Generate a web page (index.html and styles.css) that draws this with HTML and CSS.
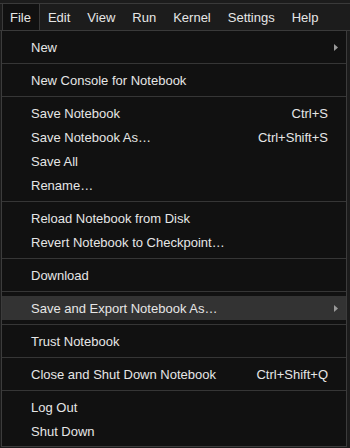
FILE: index.html
```html
<!DOCTYPE html>
<html>
<head>
    <title>File Menu</title>
    <link rel="stylesheet" href="styles.css">
</head>
<body>
    <div class="menubar">
        <div class="top-item active">File</div>
        <div class="top-item">Edit</div>
        <div class="top-item">View</div>
        <div class="top-item">Run</div>
        <div class="top-item">Kernel</div>
        <div class="top-item">Settings</div>
        <div class="top-item">Help</div>
    </div>

    <div class="menu">
        <div class="item"><span class="label">New</span><span class="arrow"><svg width="4" height="7" viewBox="0 0 4 7"><polygon points="0,0 4,3.5 0,7" fill="#9a9a9a"/></svg></span></div>
        <div class="sep"></div>
        <div class="item"><span class="label">New Console for Notebook</span></div>
        <div class="sep"></div>
        <div class="item"><span class="label">Save Notebook</span><span class="key">Ctrl+S</span></div>
        <div class="item"><span class="label">Save Notebook As…</span><span class="key">Ctrl+Shift+S</span></div>
        <div class="item"><span class="label">Save All</span></div>
        <div class="item"><span class="label">Rename…</span></div>
        <div class="sep"></div>
        <div class="item"><span class="label">Reload Notebook from Disk</span></div>
        <div class="item"><span class="label">Revert Notebook to Checkpoint…</span></div>
        <div class="sep"></div>
        <div class="item"><span class="label">Download</span></div>
        <div class="sep"></div>
        <div class="item hover"><span class="label">Save and Export Notebook As…</span><span class="arrow"><svg width="4" height="7" viewBox="0 0 4 7"><polygon points="0,0 4,3.5 0,7" fill="#9a9a9a"/></svg></span></div>
        <div class="sep"></div>
        <div class="item"><span class="label">Trust Notebook</span></div>
        <div class="sep"></div>
        <div class="item"><span class="label">Close and Shut Down Notebook</span><span class="key">Ctrl+Shift+Q</span></div>
        <div class="sep"></div>
        <div class="item"><span class="label">Log Out</span></div>
        <div class="item"><span class="label">Shut Down</span></div>
    </div>
</body>
</html>
```

FILE: styles.css
```css
body { margin: 0; background: #1c1c1c; font-family: "Liberation Sans", Arial, sans-serif; font-size: 13px; color: #e6e6e6; }

.menubar { display: flex; margin-top: 3px; height: 26px; border-top: 1px solid #3a3a3a; border-bottom: 1px solid #3a3a3a; padding-left: 2px; }
.top-item { padding: 0 9px 0 8px; line-height: 28px; }
.top-item.active { background: #111; border-left: 1px solid #3a3a3a; border-right: 1px solid #3a3a3a; padding: 0 8px 0 7px; }

.menu { width: 344px; margin-left: 1px; background: #111; border: 1px solid #3c3c3c; border-top: none; padding: 4px 0 3px; }
.item { display: flex; align-items: center; height: 24px; padding-left: 29px; }
.item.hover { background: #333; }
.label { flex: 1; }
.key { margin-right: 18px; }
.arrow { width: 18px; display: flex; align-items: center; padding-left: 6px; box-sizing: border-box; }
.sep { height: 0; margin: 4px 0; border-top: 1px solid #363636; }
```
